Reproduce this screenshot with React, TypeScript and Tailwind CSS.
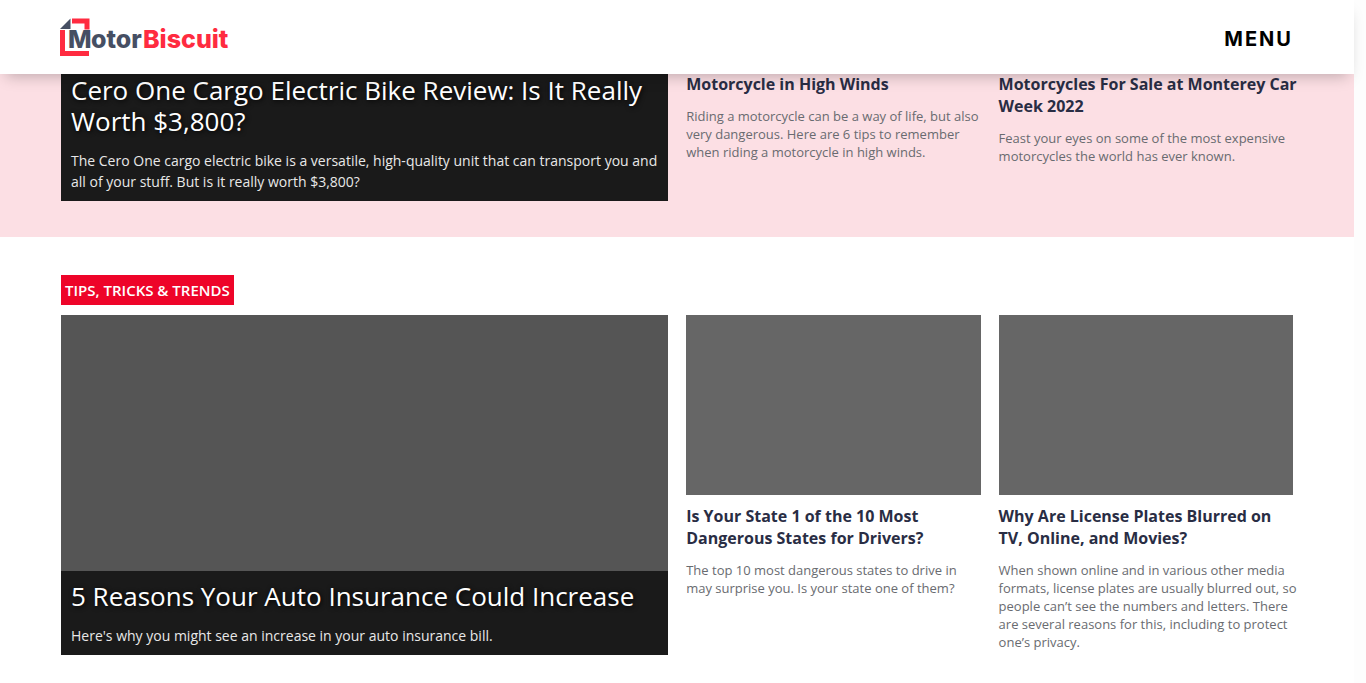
import React from "react";

type Story = { title: string; text: string };

const motorcycles: Story[] = [
  {
    title: "Motorcycle in High Winds",
    text: "Riding a motorcycle can be a way of life, but also very dangerous. Here are 6 tips to remember when riding a motorcycle in high winds.",
  },
  {
    title: "Motorcycles For Sale at Monterey Car Week 2022",
    text: "Feast your eyes on some of the most expensive motorcycles the world has ever known.",
  },
];

const tips: Story[] = [
  {
    title: "Is Your State 1 of the 10 Most Dangerous States for Drivers?",
    text: "The top 10 most dangerous states to drive in may surprise you. Is your state one of them?",
  },
  {
    title: "Why Are License Plates Blurred on TV, Online, and Movies?",
    text: "When shown online and in various other media formats, license plates are usually blurred out, so people can’t see the numbers and letters. There are several reasons for this, including to protect one’s privacy.",
  },
];

function Logo() {
  return (
    <svg className="block h-[38px] w-[170px]" viewBox="0 0 170 38" role="img" aria-label="MotorBiscuit">
      <path d="M0 12H5V33H29V38H0Z" fill="#ff2b40" />
      <path d="M12 0.5H29.5V11.5H24.5V5.5H12Z" fill="#ff2b40" />
      <path d="M10.5 0.5V11H0Z" fill="#464f63" />
      <text x="8" y="30" fill="#464f63" fontFamily="Inter, sans-serif" fontWeight="800" fontSize="25">M</text>
      <text x="31" y="30" fill="#464f63" fontFamily="Inter, sans-serif" fontWeight="800" fontSize="25">otor</text>
      <text x="83" y="30" fill="#ff2b40" fontFamily="Inter, sans-serif" fontWeight="800" fontSize="25">Biscuit</text>
    </svg>
  );
}

function Lead({ title, text }: Story) {
  return (
    <div className="bg-[#1a1a1a] px-2.5 pt-2.5 pb-[9px] text-white">
      <h2 className="text-[26px] leading-[31px] [text-shadow:1px_1px_5px_#000]">
        <a href="#story">{title}</a>
      </h2>
      <p className="mt-[13px] text-[14px] leading-[21px] text-[#e8e8e8]">{text}</p>
    </div>
  );
}

function Summary({ title, text }: Story) {
  return (
    <div className="-mr-1">
      <h3 className="text-[16px] leading-[22px] font-bold text-[#292d44]">
        <a href="#story">{title}</a>
      </h3>
      <p className="mt-3 text-[13px] leading-[18px] text-[#696b70]">{text}</p>
    </div>
  );
}

export default function App() {
  return (
    <div className="min-h-screen bg-[#fdfdfd] pr-3 font-['Open_Sans',sans-serif]">
      <header className="relative z-10 flex h-[74px] items-center justify-between bg-white pr-[61px] pl-[60px] shadow-[0_8px_14px_-6px_rgba(0,0,0,0.25)]">
        <a href="#home">
          <Logo />
        </a>
        <button type="button" className="pt-1 font-[Inter,sans-serif] text-[20px] leading-6 font-bold tracking-widest text-black">
          MENU
        </button>
      </header>
      <main className="-mt-px bg-white">
        <section className="bg-[#fcdfe4] px-[61px] pb-9">
          <div className="grid grid-cols-[33fr_16fr_16fr] gap-[18px]">
            <article className="-mt-2">
              <Lead
                title="Cero One Cargo Electric Bike Review: Is It Really Worth $3,800?"
                text="The Cero One cargo electric bike is a versatile, high-quality unit that can transport you and all of your stuff. But is it really worth $3,800?"
              />
            </article>
            {motorcycles.map((story) => (
              <article key={story.title}>
                <Summary {...story} />
              </article>
            ))}
          </div>
        </section>
        <section className="px-[61px] pt-[38px] pb-7">
          <h2 className="w-fit bg-[#ee0429] px-1 pt-px text-[15px] leading-[29px] font-semibold text-white uppercase">
            Tips, Tricks &amp; Trends
          </h2>
          <div className="mt-2.5 grid grid-cols-[33fr_16fr_16fr] items-start gap-[18px]">
            <article>
              <div className="h-64 bg-[#555]" />
              <Lead
                title="5 Reasons Your Auto Insurance Could Increase"
                text="Here's why you might see an increase in your auto insurance bill."
              />
            </article>
            {tips.map((story) => (
              <article key={story.title}>
                <div className="mb-2.5 h-[180px] bg-[#666]" />
                <Summary {...story} />
              </article>
            ))}
          </div>
        </section>
      </main>
    </div>
  );
}
